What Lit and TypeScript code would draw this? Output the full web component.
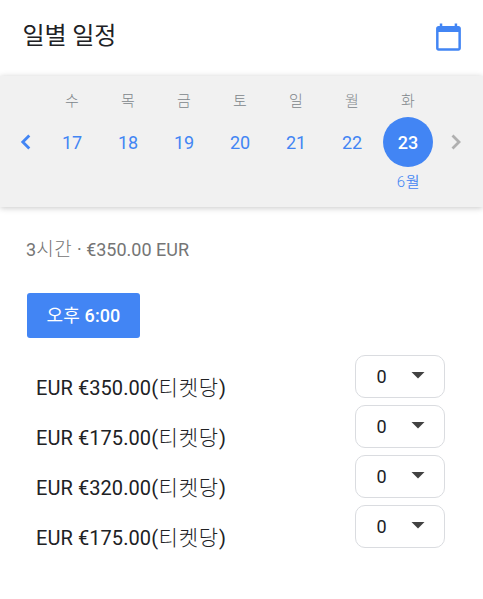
import { LitElement, html, css } from "lit";
import { customElement } from "lit/decorators.js";

const days = [["수", 17], ["목", 18], ["금", 19], ["토", 20], ["일", 21], ["월", 22], ["화", 23]] as const;
const tickets = ["350.00", "175.00", "320.00", "175.00"];

@customElement("app-root")
class AppRoot extends LitElement {
  static styles = css`
    :host { display: block; height: 599px; background: #fff; overflow: hidden; color: #202124; font-family: Roboto, "Noto Sans CJK KR", sans-serif; }
    * { box-sizing: border-box; }
    svg { display: block; flex: none; }
    header { height: 76px; display: flex; justify-content: space-between; align-items: flex-start; padding: 20px 19px 0 22.500px; }
    h1 { margin: 0; font-size: 24px; font-weight: 400; line-height: 32px; white-space: nowrap; letter-spacing: -.1px; }
    .cal { margin-top: 1px; }
    .strip { height: 131px; background: #f1f1f1; display: flex; padding: 13px 10px 0 10px; box-shadow: 0 1px 6px rgba(0,0,0,.22); }
    .arrow { width: 34px; padding: 41px 0 0 0; }
    .arrow.next { width: 26px; }
    .day { width: 56px; flex: none; display: flex; flex-direction: column; align-items: center; }
    .wd { font-size: 15px; line-height: 25px; color: #80868b; font-weight: 300; }
    .num { width: 50px; height: 50px; margin-top: 3px; border-radius: 50%; font-size: 18px; line-height: 51px; text-align: center; color: #4285f4; }
    .on { background: #4285f4; color: #fff; font-weight: 500; }
    .month { font-size: 15px; line-height: 30px; color: #4285f4; letter-spacing: .8px; font-weight: 350; padding-left: 1px; }
    .info { margin: 30px 0 0 26px; font-size: 18px; line-height: 26px; color: #757575; white-space: nowrap; }
    .info .ko { font-size: 19px; letter-spacing: .7px; }
    .time { margin: 30px 0 0 27px; width: 113px; height: 45px; border-radius: 3px; background: #4285f4; color: #fff; font-size: 18px; line-height: 45px; text-align: center; white-space: nowrap; }
    .time b { font-weight: 500; letter-spacing: .1px; }
    .time .ko { font-weight: 400; letter-spacing: .2px; }
    .list { margin-top: 17px; padding: 0 38px 0 36px; }
    .row { height: 50px; display: flex; justify-content: space-between; }
    .price { font-size: 20px; line-height: 28px; padding-top: 19px; white-space: nowrap; letter-spacing: .07px; }
    .price .ko { font-size: 21px; letter-spacing: .8px; margin-left: .5px; }
    .ko { font-weight: 300; line-height: 1; }
    .select { width: 90px; height: 43px; border: 1px solid #dadce0; border-radius: 10px; display: flex; justify-content: space-between; padding: 0 19.500px 0 20.500px; font-size: 18px; line-height: 41px; }
    .select svg { margin-top: 16px; }
  `;
  render() {
    return html`
      <header><h1>일별 일정</h1>
        <svg class="cal" width="32" height="32" viewBox="0 0 24 24" fill="#4285f4"><path d="M20 3h-1V1h-2v2H7V1H5v2H4c-1.100 0-2 .9-2 2v16c0 1.100.9 2 2 2h16c1.100 0 2-.9 2-2V5c0-1.100-.9-2-2-2zm0 18H4V8h16v13z" transform="translate(1.200 .9) scale(.93)"/></svg>
      </header>
      <section class="strip">
        <div class="arrow"><svg width="30" height="24" viewBox="0 0 30 24" fill="none" stroke="#4285f4" stroke-width="2.800"><path d="M19.300 5.500 12.800 12 19.300 18.500"/></svg></div>
        ${days.map(([d, n]) => html`<div class="day"><div class="wd">${d}</div><div class="num ${n === 23 ? "on" : ""}">${n}</div>${n === 23 ? html`<div class="month">6월</div>` : ""}</div>`)}
        <div class="arrow next"><svg width="30" height="24" viewBox="0 0 30 24" fill="none" stroke="#b0b0b0" stroke-width="2.800"><path d="M16.500 5.500 23 12 16.500 18.500"/></svg></div>
      </section>
      <div class="info">3<span class="ko">시간</span> · €350.00 EUR</div>
      <div class="time"><span class="ko">오후</span> <b>6:00</b></div>
      <div class="list">${tickets.map((p) => html`<div class="row"><div class="price">EUR €${p}(<span class="ko">티켓당</span>)</div>
        <div class="select"><span>0</span><svg width="14" height="7" viewBox="0 0 14 7"><path fill="#424242" d="M.5 0h13L7 6.500z"/></svg></div></div>`)}</div>`;
  }
}
